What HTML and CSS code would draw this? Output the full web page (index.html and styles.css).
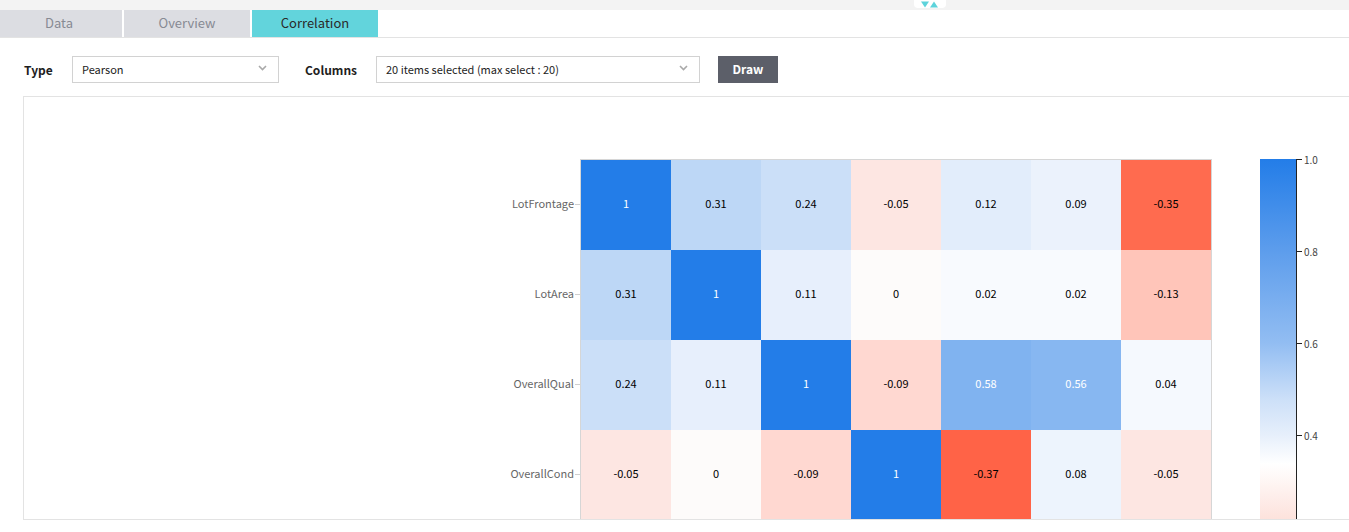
FILE: index.html
```html
<!DOCTYPE html>
<html>
<head>
<meta charset="utf-8">
<link rel="stylesheet" href="styles.css">
</head>
<body>
<div class="topstrip">
  <div class="pill">
    <svg width="18" height="7" viewBox="0 0 18 7"><polygon points="0,0.5 8,0.5 4,6.5" fill="#5dd3db"/><polygon points="9,6.5 17,6.5 13,0.5" fill="#5dd3db"/></svg>
  </div>
</div>
<div class="tabs">
  <div class="tab">Data</div>
  <div class="tab">Overview</div>
  <div class="tab active">Correlation</div>
</div>
<div class="controls">
  <span class="lbl lbl-type">Type</span>
  <div class="select sel-type"><span>Pearson</span><svg class="chev" width="9" height="6" viewBox="0 0 9 6"><polyline points="1,1 4.5,4.5 8,1" fill="none" stroke="#a9a9a9" stroke-width="1.6"/></svg></div>
  <span class="lbl lbl-cols">Columns</span>
  <div class="select sel-cols"><span>20 items selected (max select : 20)</span><svg class="chev" width="9" height="6" viewBox="0 0 9 6"><polyline points="1,1 4.5,4.5 8,1" fill="none" stroke="#a9a9a9" stroke-width="1.6"/></svg></div>
  <button class="draw">Draw</button>
</div>
<div class="panel">
  <div class="chart">
    <div class="ylabels">
      <div class="ylabel"><span>LotFrontage</span><i class="ytick"></i></div>
      <div class="ylabel"><span>LotArea</span><i class="ytick"></i></div>
      <div class="ylabel"><span>OverallQual</span><i class="ytick"></i></div>
      <div class="ylabel"><span>OverallCond</span><i class="ytick"></i></div>
    </div>
    <div class="grid">
      <div class="cell light" style="background:#237de8">1</div>
      <div class="cell" style="background:#bdd7f6">0.31</div>
      <div class="cell" style="background:#cbdff8">0.24</div>
      <div class="cell" style="background:#fde6e2">-0.05</div>
      <div class="cell" style="background:#e2edfb">0.12</div>
      <div class="cell" style="background:#ebf2fc">0.09</div>
      <div class="cell" style="background:#ff6b4f">-0.35</div>

      <div class="cell" style="background:#bdd7f6">0.31</div>
      <div class="cell light" style="background:#237de8">1</div>
      <div class="cell" style="background:#e7effc">0.11</div>
      <div class="cell" style="background:#fdfbfa">0</div>
      <div class="cell" style="background:#f8fafe">0.02</div>
      <div class="cell" style="background:#f8fafe">0.02</div>
      <div class="cell" style="background:#ffc5b9">-0.13</div>

      <div class="cell" style="background:#cbdff8">0.24</div>
      <div class="cell" style="background:#e7effc">0.11</div>
      <div class="cell light" style="background:#237de8">1</div>
      <div class="cell" style="background:#ffd8d1">-0.09</div>
      <div class="cell light" style="background:#80b3f0">0.58</div>
      <div class="cell light" style="background:#87b7f1">0.56</div>
      <div class="cell" style="background:#f5f9fe">0.04</div>

      <div class="cell" style="background:#fde6e2">-0.05</div>
      <div class="cell" style="background:#fdfbfa">0</div>
      <div class="cell" style="background:#ffd8d1">-0.09</div>
      <div class="cell light" style="background:#237de8">1</div>
      <div class="cell" style="background:#ff6347">-0.37</div>
      <div class="cell" style="background:#edf4fd">0.08</div>
      <div class="cell" style="background:#fde6e2">-0.05</div>
    </div>
    <div class="cbar">
      <div class="cbar-fill"></div>
      <div class="axis">
        <div class="tk"><i class="tkline"></i><span>1.0</span></div>
        <div class="tk"><i class="tkline"></i><span>0.8</span></div>
        <div class="tk"><i class="tkline"></i><span>0.6</span></div>
        <div class="tk"><i class="tkline"></i><span>0.4</span></div>
      </div>
    </div>
  </div>
</div>
</body>
</html>
```
FILE: styles.css
```css
html, body {
  margin: 0;
  padding: 0;
  overflow: hidden;
  background: #ffffff;
  font-family: "Noto Sans CJK KR", "Noto Sans", sans-serif;
  color: #333;
}
.topstrip {
  height: 10px;
  background: #f3f3f3;
  display: flex;
}
.pill {
  margin-left: 914px;
  width: 32px;
  height: 8px;
  background: #fff;
  border-radius: 0 0 4px 4px;
  display: flex;
  justify-content: center;
  align-items: flex-start;
}
.pill svg { display: block; margin-top: 1px; }
.tabs {
  display: flex;
  gap: 2px;
  height: 27px;
  margin-left: -4px;
  border-bottom: 1px solid #e3e3e3;
}
.tab {
  flex: 0 0 126px;
  height: 27px;
  background: #dcdde2;
  color: #878a93;
  font-size: 13px;
  line-height: 25px;
  text-align: center;
}
.tab.active {
  background: #62d4dc;
  color: #2a2a2a;
}
.controls {
  display: flex;
  align-items: center;
  height: 27px;
  padding: 18px 0 13px 24px;
}
.lbl {
  font-size: 12px;
  font-weight: bold;
  color: #1e1e1e;
  line-height: 25px;
}
.lbl-type { flex: 0 0 48px; }
.lbl-cols { flex: 0 0 71px; margin-left: 26px; }
.select {
  box-sizing: border-box;
  height: 27px;
  border: 1px solid #d2d2d2;
  display: flex;
  align-items: center;
  justify-content: space-between;
  padding: 0 11px 1px 9px;
  font-size: 11px;
  color: #222;
}
.sel-type { flex: 0 0 207px; }
.sel-cols { flex: 0 0 324px; }
.chev { display: block; margin-top: -2px; }
.draw {
  margin-left: 18px;
  width: 60px;
  height: 27px;
  border: 0;
  background: #5c5f69;
  color: #fff;
  font-family: inherit;
  font-size: 12px;
  font-weight: bold;
  padding: 0 0 2px 0;
}
.panel {
  margin-left: 23px;
  width: 1340px;
  height: 422px;
  border: 1px solid #e3e3e3;
  overflow: hidden;
}
.chart {
  display: flex;
  align-items: flex-start;
  padding-top: 62px;
}
.ylabels {
  width: 556px;
  margin-top: 1px;
  display: flex;
  flex-direction: column;
}
.ylabel {
  height: 90px;
  display: flex;
  align-items: center;
  justify-content: flex-end;
  font-size: 11px;
  color: #666;
}
.ylabel span { margin-top: -4px; }
.ytick {
  display: block;
  width: 5px;
  height: 1px;
  background: #cfcfcf;
  margin-left: 1px;
  margin-top: -2px;
}
.grid {
  display: grid;
  grid-template-columns: repeat(7, 90px);
  grid-auto-rows: 90px;
  border: 1px solid #d6d6d6;
}
.cell {
  display: flex;
  align-items: center;
  justify-content: center;
  font-size: 11px;
  color: #000;
  padding-bottom: 4px;
  box-sizing: border-box;
}
.cell.light { color: #fff; }
.cbar {
  margin-left: 48px;
  display: flex;
}
.cbar-fill {
  width: 36px;
  height: 460px;
  background: linear-gradient(to bottom,
    #237de8 0px,
    #5d9dec 92px,
    #92bdf2 184px,
    #cde0f8 241px,
    #e6effb 276px,
    #ffffff 305px,
    #fde2dc 360px,
    #fcc2b4 460px);
}
.axis {
  width: 60px;
  height: 460px;
  border-left: 1px solid #222;
  display: flex;
  flex-direction: column;
  gap: 91px;
}
.tk {
  height: 1px;
  display: flex;
  align-items: center;
}
.tkline {
  display: block;
  width: 5px;
  height: 1px;
  background: #222;
}
.tk span {
  margin-left: 2px;
  font-size: 10px;
  line-height: 12px;
  color: #444;
}
```
